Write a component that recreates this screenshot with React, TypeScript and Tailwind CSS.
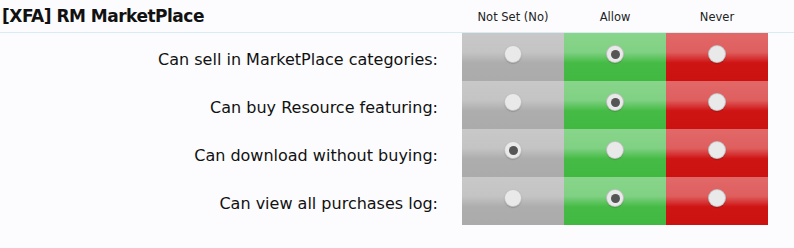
import React from 'react';

const rows = [
  { label: 'Can sell in MarketPlace categories:', value: 'allow' },
  { label: 'Can buy Resource featuring:', value: 'allow' },
  { label: 'Can download without buying:', value: 'unset' },
  { label: 'Can view all purchases log:', value: 'allow' },
];

const cols = [
  { key: 'unset', bg: 'bg-[linear-gradient(to_bottom,#c8c8c8_0%,#c4c4c4_40%,#adadad_62%,#ababab_100%)]' },
  { key: 'allow', bg: 'bg-[linear-gradient(to_bottom,#88d58b_0%,#80d183_40%,#45bb45_62%,#41b941_100%)]' },
  { key: 'never', bg: 'bg-[linear-gradient(to_bottom,#e26868_0%,#df5f5f_40%,#cf1414_62%,#cc1111_100%)]' },
];

function Radio({ checked }: { checked: boolean }) {
  return (
    <div className="w-[18px] h-[18px] rounded-full bg-[#e9e9e9] border border-[#a8a8a8]/60 shadow-[0_1px_1px_rgba(0,0,0,0.15)] flex items-center justify-center">
      {checked && <div className="w-[9px] h-[9px] rounded-full bg-[#555]" />}
    </div>
  );
}

export default function App() {
  return (
    <div className="w-[794px] h-[248px] bg-[#fcfcfe] font-['DejaVu_Sans',sans-serif] text-[#111]">
      <div className="flex items-end h-[33px] border-b border-[#d8edf3]">
        <h2 className="pl-[2px] pb-[7px] text-[17px] font-bold leading-none tracking-[-0.5px] w-[462px]">
          [XFA] RM MarketPlace
        </h2>
        <div className="flex pb-[9px] text-[11.5px] leading-none text-[#222]">
          <span className="w-[102px] text-center">Not Set (No)</span>
          <span className="w-[102px] text-center">Allow</span>
          <span className="w-[102px] text-center">Never</span>
        </div>
      </div>
      {rows.map((r) => (
        <div key={r.label} className="flex h-[48px]">
          <div className="w-[462px] pr-[24px] flex items-center justify-end text-[16px] pt-[6px]">
            {r.label}
          </div>
          {cols.map((c) => (
            <div key={c.key} className={`w-[102px] h-[48px] flex justify-center pt-[12px] ${c.bg}`}>
              <Radio checked={r.value === c.key} />
            </div>
          ))}
        </div>
      ))}
    </div>
  );
}
